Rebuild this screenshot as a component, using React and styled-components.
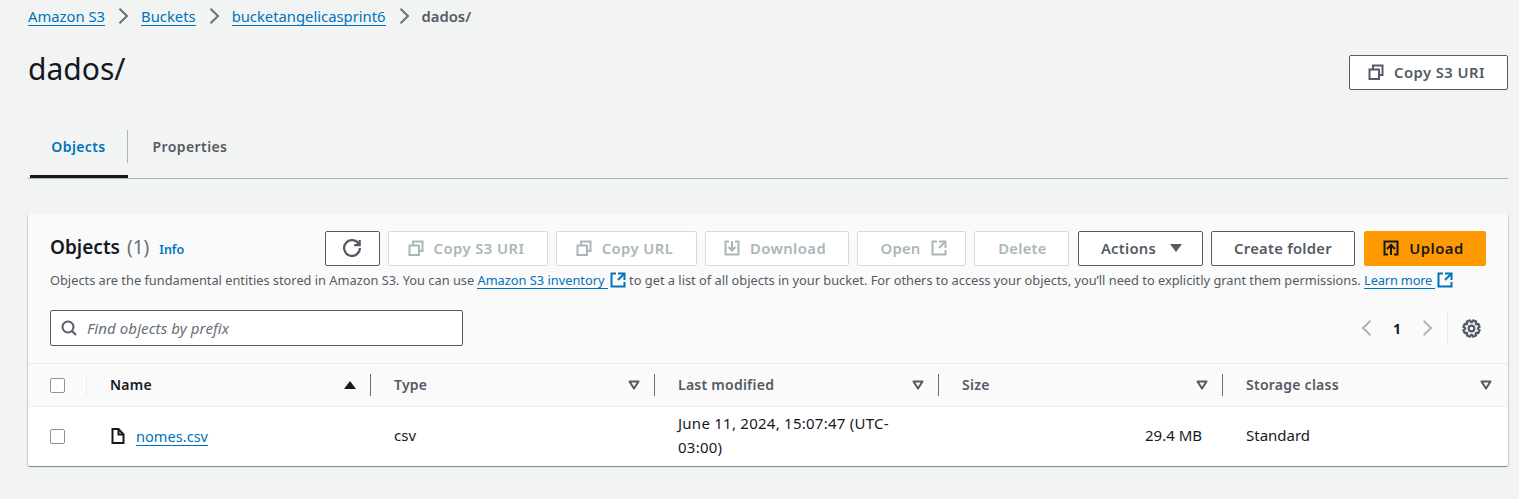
import React from "react";
import styled, { createGlobalStyle } from "styled-components";

const Global = createGlobalStyle`
  html, body { margin: 0; padding: 0; background: #f2f3f3; }
  body { font-family: "Noto Sans", "Open Sans", sans-serif; color: #16191f; font-size: 14px; overflow: hidden; font-variant-ligatures: none; }
  * { box-sizing: border-box; }
`;

const Icon = ({ size = 16, width = 2, children }) => (
  <Svg viewBox="0 0 16 16" $size={size} strokeWidth={width}>
    {children}
  </Svg>
);

// eight teeth round the gear, worked out once instead of writing every point by hand
const gearPath = () => {
  const pts = [];
  for (let i = 0; i < 8; i++) {
    const a = (i * Math.PI) / 4 + Math.PI / 8;
    [[-0.3, 5.4], [-0.2, 7], [0.2, 7], [0.3, 5.4]].forEach(([d, r]) => {
      pts.push(`${(8 + r * Math.cos(a + d)).toFixed(2)} ${(8 + r * Math.sin(a + d)).toFixed(2)}`);
    });
  }
  return `M${pts.join("L")}z`;
};

const CopyIcon = () => (
  <Icon>
    <path d="M1.5 5.5H11V15H1.5z" />
    <path d="M5 5V1.5h9.5V11H11" />
  </Icon>
);
const RefreshIcon = () => (
  <Icon size={18}>
    <path d="M10 5.5h4.8V.8" />
    <path d="M15 8a7 7 0 1 1-.9-3.4" />
  </Icon>
);
const DownloadIcon = () => (
  <Icon>
    <path d="M5 1.5H1.5v13h13v-13H11" />
    <path d="M11.5 7 8 10.5 4.5 7" />
    <path d="M8 10V1" />
  </Icon>
);
const ExternalIcon = ({ size = 16 }) => (
  <Icon size={size}>
    <path d="M14.5 8v-6.5H8" />
    <path d="M14.5 1.5 8 8" />
    <path d="M6 1.5H1.5v13h13V10" />
  </Icon>
);
const UploadIcon = () => (
  <Icon>
    <path d="M5 14.5H1.5v-13h13v13H11" />
    <path d="M4 9l4-4 4 4" />
    <path d="M8 5.5V15" />
  </Icon>
);
const FileIcon = () => (
  <Icon>
    <path d="M8.5 1v5.5H13.5" />
    <path d="M13.5 15h-11V1h6l5 5.5z" />
  </Icon>
);
const SearchIcon = () => (
  <Icon>
    <circle cx="7" cy="7" r="5.5" />
    <path d="m11 11 4 4" />
  </Icon>
);
const Chevron = ({ left }) => (
  <Icon>
    <path d={left ? "M11.5.8 4 8l7.5 7.2" : "M4.5.8 12 8l-7.5 7.2"} />
  </Icon>
);
const GearIcon = () => (
  <Icon size={19} width={1.8}>
    <path d={gearPath()} strokeLinejoin="round" />
    <circle cx="8" cy="8" r="2.4" />
  </Icon>
);
const FilterCaret = () => (
  <CaretSvg viewBox="0 0 12 10">
    <path d="M1.5 1.5h9L6 8.5z" fill="none" stroke="#545b64" strokeWidth="2" strokeLinejoin="round" />
  </CaretSvg>
);

const Svg = styled.svg`
  width: ${(p) => p.$size}px;
  height: ${(p) => p.$size}px;
  flex: none;
  fill: none;
  stroke: currentColor;
  stroke-linejoin: miter;
`;

const CaretSvg = styled.svg`
  width: 12px;
  height: 10px;
  flex: none;
  margin-top: 2px;
`;

const Page = styled.div`
  width: 1519px;
  height: 499px;
  padding: 0 11px 0 28px;
`;

const Breadcrumbs = styled.nav`
  display: flex;
  align-items: center;
  height: 32px;
  gap: 10px;
  color: #687078;
  font-size: 14.8px;
`;

const Crumb = styled.a`
  color: #0073bb;
  border-bottom: 1px solid #0073bb;
  line-height: 18px;
`;

const CurrentCrumb = styled.span`
  color: #545b64;
  font-weight: 600;
  line-height: 18px;
`;

const Head = styled.header`
  display: flex;
  justify-content: space-between;
  align-items: flex-start;
  height: 98px;
  padding-top: 23px;
`;

const Title = styled.h1`
  margin: 0;
  font-size: 30px;
  line-height: 28px;
  font-weight: 400;
`;

const Tabs = styled.div`
  display: flex;
  height: 49px;
  border-bottom: 1px solid #aab7b8;
`;

const Tab = styled.div`
  position: relative;
  width: ${(p) => p.$w}px;
  margin-left: ${(p) => p.$ml || 0}px;
  padding-top: 8px;
  text-align: center;
  font-weight: 600;
  font-size: 14px;
  letter-spacing: 0.4px;
  line-height: 18px;
  color: ${(p) => (p.$active ? "#0073bb" : "#545b64")};
  ${(p) =>
    p.$active &&
    `
    border-right: 1px solid #aab7b8;
    height: 33px;
    &::after {
      content: "";
      position: absolute;
      left: 0;
      right: -1px;
      top: 45px;
      height: 3px;
      background: #16191f;
    }
  `}
`;

const Card = styled.section`
  margin-top: 35px;
  width: 1480px;
  background: #fafafa;
  border-radius: 2px;
  box-shadow: 0 1px 1px 0 rgba(0, 28, 36, 0.3), 1px 1px 1px 0 rgba(0, 28, 36, 0.15), -1px 1px 1px 0 rgba(0, 28, 36, 0.15);
`;

const CardTop = styled.div`
  padding: 17px 22px 0;
  height: 150px;
  border-bottom: 1px solid #eaeded;
`;

const TitleRow = styled.div`
  display: flex;
  justify-content: space-between;
  align-items: center;
  height: 34px;
`;

const CardTitle = styled.div`
  display: flex;
  align-items: baseline;
  gap: 7px;
  margin-bottom: 2px;
  font-size: 19px;
  font-weight: 600;
`;

const Count = styled.span`
  color: #687078;
  font-weight: 400;
`;

const Info = styled.a`
  margin-left: 3px;
  font-size: 12.5px;
  font-weight: 600;
  color: #0073bb;
`;

const Actions = styled.div`
  display: flex;
  gap: 8px;
`;

const Button = styled.button`
  display: flex;
  align-items: center;
  justify-content: center;
  gap: 10px;
  width: ${(p) => p.$w}px;
  height: 35px;
  margin-left: ${(p) => p.$ml || 0}px;
  padding: 0 ${(p) => p.$pr || 0}px 1px ${(p) => p.$pl || 0}px;
  font-family: inherit;
  font-size: 14.8px;
  font-weight: 600;
  letter-spacing: ${(p) => p.$ls || 0.25}px;
  border-radius: 2px;
  border: 1px solid ${(p) => (p.disabled ? "#d5dbdb" : "#545b64")};
  background: #fff;
  color: ${(p) => (p.disabled ? "#aab7b8" : "#545b64")};
`;

const PrimaryButton = styled(Button)`
  background: #ff9900;
  border-color: #ff9900;
  color: #16191f;
`;

const ActionCaret = styled.span`
  width: 0;
  height: 0;
  border-left: 6px solid transparent;
  border-right: 6px solid transparent;
  border-top: 8px solid #545b64;
  margin-left: 4px;
`;

const Description = styled.p`
  margin: 6px 0 0;
  display: flex;
  align-items: center;
  height: 18px;
  font-size: 12.8px;
  line-height: 16px;
  color: #545b64;
  white-space: pre;
`;

const InlineLink = styled.a`
  color: #0073bb;
  border-bottom: 1px solid #0073bb;
  line-height: 16px;
  letter-spacing: ${(p) => (p.$tight ? -0.15 : 0)}px;
`;

const ExternalMark = styled.span`
  display: inline-flex;
  margin-left: 2px;
  color: #0073bb;
`;

const FilterRow = styled.div`
  display: flex;
  justify-content: space-between;
  align-items: flex-start;
  margin-top: 21px;
`;

const SearchBox = styled.div`
  display: flex;
  align-items: center;
  gap: 10px;
  width: 413px;
  height: 36px;
  padding-left: 10px;
  background: #fff;
  border: 1px solid #545b64;
  border-radius: 2px;
  color: #545b64;
`;

const Placeholder = styled.span`
  font-style: italic;
  font-size: 15px;
  letter-spacing: 0.1px;
  color: #687078;
`;

const Pager = styled.div`
  display: flex;
  align-items: center;
  height: 36px;
  color: #aab7b8;
  margin-right: 5px;
`;

const PageNumber = styled.span`
  font-size: 14px;
  font-weight: 700;
  color: #16191f;
  width: 44px;
  text-align: center;
`;

const PrefButton = styled.div`
  display: flex;
  align-items: center;
  height: 36px;
  margin-left: 12px;
  padding-left: 14px;
  border-left: 1px solid #eaeded;
  color: #545b64;
`;

const HeaderRow = styled.div`
  display: grid;
  grid-template-columns: 60px repeat(4, 284px) 1fr;
  height: 43px;
  align-items: center;
  border-bottom: 1px solid #eaeded;
`;

const BodyRow = styled.div`
  display: grid;
  grid-template-columns: 60px repeat(4, 284px) 1fr;
  height: 59px;
  align-items: center;
  background: #fff;
  border-radius: 0 0 2px 2px;
`;

const CheckCell = styled.div`
  display: flex;
  align-items: center;
  padding-left: 22px;
  height: 22px;
  border-right: ${(p) => (p.$head ? "1px solid #eaeded" : "none")};
  margin-right: 1px;
`;

const Checkbox = styled.span`
  display: block;
  width: 15px;
  height: 15px;
  border: 1px solid #879596;
  border-radius: 2px;
  background: #fff;
`;

const HeadCell = styled.div`
  display: flex;
  align-items: center;
  justify-content: space-between;
  height: 22px;
  padding: 0 ${(p) => (p.$last ? 15 : 14)}px 2px 22px;
  margin-right: 1px;
  font-weight: 600;
  font-size: 14px;
  letter-spacing: 0.25px;
  color: ${(p) => (p.$sorted ? "#16191f" : "#545b64")};
  border-right: ${(p) => (p.$last ? "none" : "1px solid #687078")};
`;

const SortMark = styled.span`
  width: 0;
  height: 0;
  margin-top: 2px;
  border-left: 6px solid transparent;
  border-right: 6px solid transparent;
  border-bottom: 8px solid #16191f;
`;

const Cell = styled.div`
  display: flex;
  align-items: center;
  padding: 0 22px 4px;
  gap: 10px;
  font-size: 15px;
  line-height: 24px;
  justify-content: ${(p) => (p.$right ? "flex-end" : "flex-start")};
`;

const NameCell = styled(Cell)`
  padding-bottom: 1px;
`;

const DateCell = styled(Cell)`
  letter-spacing: 0.25px;
`;

const FileLink = styled.a`
  color: #0073bb;
  border-bottom: 1px solid #0073bb;
  line-height: 18px;
  font-size: 14.6px;
`;

const columns = ["Type", "Last modified", "Size", "Storage class"];

export default function App() {
  return (
    <Page>
      <Global />
      <Breadcrumbs>
        <Crumb>Amazon S3</Crumb>
        <Chevron />
        <Crumb>Buckets</Crumb>
        <Chevron />
        <Crumb>bucketangelicasprint6</Crumb>
        <Chevron />
        <CurrentCrumb>dados/</CurrentCrumb>
      </Breadcrumbs>
      <Head>
        <Title>dados/</Title>
        <Button $w={159} $ls={0.45} $pr={4}>
          <CopyIcon />
          Copy S3 URI
        </Button>
      </Head>
      <Tabs>
        <Tab $active $w={98} $ml={2}>Objects</Tab>
        <Tab $w={124}>Properties</Tab>
      </Tabs>
      <Card>
        <CardTop>
          <TitleRow>
            <CardTitle>
              <span>Objects</span>
              <Count>(1)</Count>
              <Info>Info</Info>
            </CardTitle>
            <Actions>
              <Button $w={55} $pr={2}><RefreshIcon /></Button>
              <Button disabled $w={160} $ls={0.45} $pr={4}><CopyIcon />Copy S3 URI</Button>
              <Button disabled $w={141} $ls={0.45} $pr={4}><CopyIcon />Copy URL</Button>
              <Button disabled $w={144} $ls={0.45} $pr={4}><DownloadIcon />Download</Button>
              <Button disabled $w={109} $pl={4}>Open<ExternalIcon /></Button>
              <Button disabled $w={95} $pl={2}>Delete</Button>
              <Button $w={125} $ml={1} $pl={2}>Actions<ActionCaret /></Button>
              <Button $w={144}>Create folder</Button>
              <PrimaryButton $w={122} $ml={1} $ls={0.45} $pr={3}><UploadIcon />Upload</PrimaryButton>
            </Actions>
          </TitleRow>
          <Description>
            <span>Objects are the fundamental entities stored in Amazon S3. You can use </span>
            <InlineLink>Amazon S3 inventory </InlineLink>
            <ExternalMark><ExternalIcon /></ExternalMark>
            <span> to get a list of all objects in your bucket. For others to access your objects, you’ll need to explicitly grant them permissions. </span>
            <InlineLink $tight>Learn more </InlineLink>
            <ExternalMark><ExternalIcon /></ExternalMark>
          </Description>
          <FilterRow>
            <SearchBox>
              <SearchIcon />
              <Placeholder>Find objects by prefix</Placeholder>
            </SearchBox>
            <Pager>
              <Chevron left />
              <PageNumber>1</PageNumber>
              <Chevron />
              <PrefButton><GearIcon /></PrefButton>
            </Pager>
          </FilterRow>
        </CardTop>
        <HeaderRow>
          <CheckCell $head><Checkbox /></CheckCell>
          <HeadCell $sorted>Name<SortMark /></HeadCell>
          {columns.map((c, i) => (
            <HeadCell key={c} $last={i === columns.length - 1}>{c}<FilterCaret /></HeadCell>
          ))}
        </HeaderRow>
        <BodyRow>
          <CheckCell><Checkbox /></CheckCell>
          <NameCell><FileIcon /><FileLink>nomes.csv</FileLink></NameCell>
          <Cell>csv</Cell>
          <DateCell>June 11, 2024, 15:07:47 (UTC-03:00)</DateCell>
          <Cell $right>29.4 MB</Cell>
          <Cell>Standard</Cell>
        </BodyRow>
      </Card>
    </Page>
  );
}
